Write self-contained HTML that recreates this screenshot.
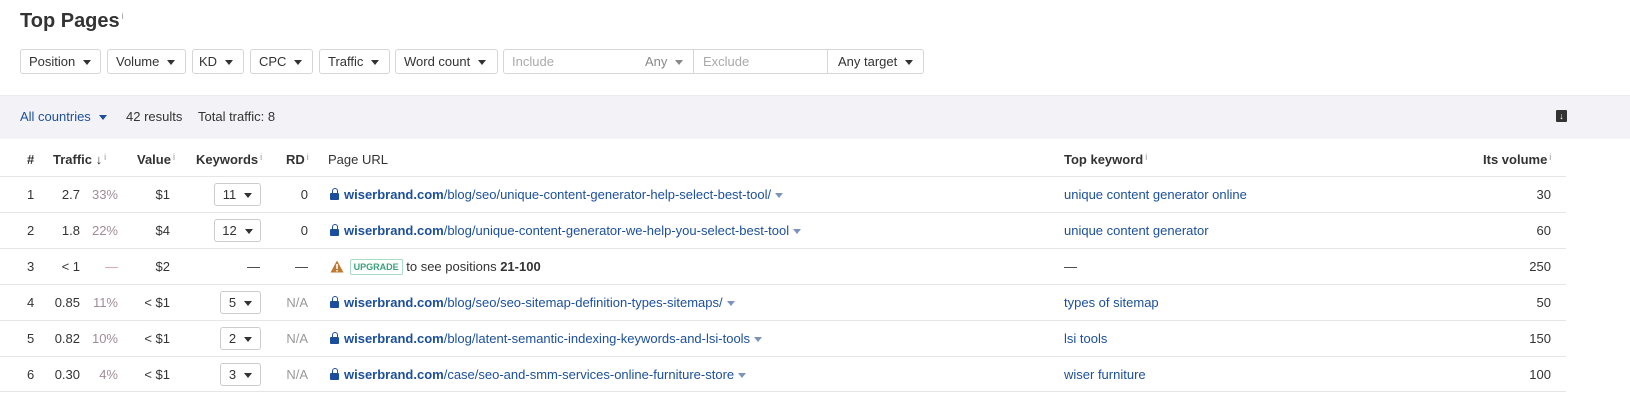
<!DOCTYPE html>
<html><head><style>
*{box-sizing:border-box;margin:0;padding:0}
body{width:1630px;height:410px;background:#fff;font-family:"Liberation Sans",Arial,sans-serif;font-size:13px;color:#333;position:relative;overflow:hidden}
.a{position:absolute;white-space:nowrap}
h1{position:absolute;left:20px;top:10px;font-size:20px;font-weight:bold;color:#333}
.sup{font-size:9px;color:#999;font-weight:normal;vertical-align:top;position:relative;top:1px;margin-left:2px}
.btn{position:absolute;top:49px;height:25px;border:1px solid #d6d6d6;border-radius:3px;padding:0 8px;line-height:23px;color:#333;white-space:nowrap}
.tri{display:inline-block;width:0;height:0;border-left:4px solid transparent;border-right:4px solid transparent;border-top:5px solid #333;margin-left:8px;vertical-align:1px}
.band{position:absolute;left:0;top:95px;width:1630px;height:44px;background:#f3f3f7;border-top:1px solid #e9e9ee}
.line{position:absolute;left:0;width:1566px;height:1px;background:#e6e6e6}
.th{position:absolute;top:152px;font-weight:bold;color:#333;white-space:nowrap}
.i{font-size:9px;color:#999;font-weight:normal;vertical-align:4px;margin-left:2px}
.r{text-align:right}
.g{color:#999}
.pc{color:#a08c98}
.lk{color:#1b4f9c}
.lk b{color:#1b4f9c}
.dd{position:absolute;width:47px;height:23px;border:1px solid #ccc;border-radius:3px;text-align:center;line-height:21px;white-space:nowrap}
.st{display:inline-block;width:0;height:0;border-left:4px solid transparent;border-right:4px solid transparent;border-top:5px solid #7c93bd;margin-left:4px;vertical-align:1px}
.lock{display:inline-block;width:9px;height:7px;background:#1b4f9c;border-radius:1px;position:relative;margin-right:5px;vertical-align:-1px}
.lock:before{content:"";position:absolute;left:1.5px;top:-5px;width:6px;height:6px;border:1.5px solid #1b4f9c;border-bottom:none;border-radius:3px 3px 0 0;box-sizing:border-box}
</style></head><body>
<h1>Top Pages<span class="sup">i</span></h1>
<div class="btn" style="left:20px;width:81px">Position<span class="tri"></span></div>
<div class="btn" style="left:107px;width:79px">Volume<span class="tri"></span></div>
<div class="btn" style="left:192px;width:52px;padding:0 6px">KD<span class="tri"></span></div>
<div class="btn" style="left:250px;width:63px">CPC<span class="tri"></span></div>
<div class="btn" style="left:319px;width:71px">Traffic<span class="tri"></span></div>
<div class="btn" style="left:395px;width:103px">Word count<span class="tri"></span></div>
<div class="btn" style="left:503px;width:421px;padding:0"></div>
<div class="a" style="left:512px;top:54px;color:#aaa">Include</div>
<div class="a" style="left:645px;top:54px;color:#888">Any<span class="tri" style="border-top-color:#888"></span></div>
<div class="a" style="left:693px;top:50px;width:1px;height:23px;background:#d6d6d6"></div>
<div class="a" style="left:703px;top:54px;color:#aaa">Exclude</div>
<div class="a" style="left:827px;top:50px;width:1px;height:23px;background:#d6d6d6"></div>
<div class="a" style="left:838px;top:54px">Any target<span class="tri"></span></div>

<div class="band"></div>
<div class="a lk" style="left:20px;top:109px">All countries<span class="tri" style="border-top-color:#1b4f9c"></span></div>
<div class="a" style="left:126px;top:109px">42 results</div>
<div class="a" style="left:198px;top:109px">Total traffic: 8</div>
<div class="a" style="left:1556px;top:110px;width:11px;height:12px;background:#333;border-radius:1px;color:#fff;font-size:9px;text-align:center;line-height:12px;font-weight:bold">↓</div>

<div class="th" style="left:27px">#</div>
<div class="th" style="left:53px">Traffic ↓<span class="i">i</span></div>
<div class="th" style="left:137px">Value<span class="i">i</span></div>
<div class="th" style="left:196px">Keywords<span class="i">i</span></div>
<div class="th" style="left:286px">RD<span class="i">i</span></div>
<div class="th" style="left:328px;font-weight:normal">Page URL</div>
<div class="th" style="left:1064px">Top keyword<span class="i">i</span></div>
<div class="th" style="left:1483px">Its volume<span class="i">i</span></div>

<div class="line" style="top:176px"></div>
<div class="line" style="top:212px"></div>
<div class="line" style="top:248px"></div>
<div class="line" style="top:284px"></div>
<div class="line" style="top:320px"></div>
<div class="line" style="top:356px"></div>
<div class="line" style="top:391px"></div>

<div class="a" style="left:27px;top:187px">1</div>
<div class="a r" style="left:40px;width:40px;top:187px">2.7</div>
<div class="a r pc" style="left:80px;width:38px;top:187px">33%</div>
<div class="a r" style="left:130px;width:40px;top:187px">$1</div>
<div class="dd" style="left:214px;top:183px">11<span class="tri"></span></div>
<div class="a r" style="left:268px;width:40px;top:187px">0</div>
<div class="a lk" style="left:330px;top:187px"><span class="lock"></span><b>wiserbrand.com</b>/blog/seo/unique-content-generator-help-select-best-tool/<span class="st"></span></div>
<div class="a lk" style="left:1064px;top:187px">unique content generator online</div>
<div class="a r" style="left:1450px;width:101px;top:187px">30</div>

<div class="a" style="left:27px;top:223px">2</div>
<div class="a r" style="left:40px;width:40px;top:223px">1.8</div>
<div class="a r pc" style="left:80px;width:38px;top:223px">22%</div>
<div class="a r" style="left:130px;width:40px;top:223px">$4</div>
<div class="dd" style="left:214px;top:219px">12<span class="tri"></span></div>
<div class="a r" style="left:268px;width:40px;top:223px">0</div>
<div class="a lk" style="left:330px;top:223px"><span class="lock"></span><b>wiserbrand.com</b>/blog/unique-content-generator-we-help-you-select-best-tool<span class="st"></span></div>
<div class="a lk" style="left:1064px;top:223px">unique content generator</div>
<div class="a r" style="left:1450px;width:101px;top:223px">60</div>

<div class="a" style="left:27px;top:259px">3</div>
<div class="a r" style="left:40px;width:40px;top:259px">&lt; 1</div>
<div class="a r" style="left:80px;width:38px;top:259px;color:#d9a0a8">—</div>
<div class="a r" style="left:130px;width:40px;top:259px">$2</div>
<div class="a r" style="left:220px;width:40px;top:259px">—</div>
<div class="a r" style="left:268px;width:40px;top:259px">—</div>
<div class="a" style="left:330px;top:259px"><svg width="14" height="13" viewBox="0 0 14 13" style="vertical-align:-2px"><path d="M7 0.5L13.5 12.5H0.5Z" fill="#c07a30"/><rect x="6.2" y="4" width="1.6" height="5" fill="#fff"/><rect x="6.2" y="10" width="1.6" height="1.5" fill="#fff"/></svg>
<span style="display:inline-block;border:1px solid #a7dcc6;border-radius:2px;color:#3aa37a;font-size:9px;font-weight:bold;padding:0 3px;line-height:14px;margin-left:2px;vertical-align:1px">UPGRADE</span> to see positions <b>21-100</b></div>
<div class="a" style="left:1064px;top:259px">—</div>
<div class="a r" style="left:1450px;width:101px;top:259px">250</div>

<div class="a" style="left:27px;top:295px">4</div>
<div class="a r" style="left:40px;width:40px;top:295px">0.85</div>
<div class="a r pc" style="left:80px;width:38px;top:295px">11%</div>
<div class="a r" style="left:130px;width:40px;top:295px">&lt; $1</div>
<div class="dd" style="left:220px;top:291px;width:41px">5<span class="tri"></span></div>
<div class="a r g" style="left:268px;width:40px;top:295px">N/A</div>
<div class="a lk" style="left:330px;top:295px"><span class="lock"></span><b>wiserbrand.com</b>/blog/seo/seo-sitemap-definition-types-sitemaps/<span class="st"></span></div>
<div class="a lk" style="left:1064px;top:295px">types of sitemap</div>
<div class="a r" style="left:1450px;width:101px;top:295px">50</div>

<div class="a" style="left:27px;top:331px">5</div>
<div class="a r" style="left:40px;width:40px;top:331px">0.82</div>
<div class="a r pc" style="left:80px;width:38px;top:331px">10%</div>
<div class="a r" style="left:130px;width:40px;top:331px">&lt; $1</div>
<div class="dd" style="left:220px;top:327px;width:41px">2<span class="tri"></span></div>
<div class="a r g" style="left:268px;width:40px;top:331px">N/A</div>
<div class="a lk" style="left:330px;top:331px"><span class="lock"></span><b>wiserbrand.com</b>/blog/latent-semantic-indexing-keywords-and-lsi-tools<span class="st"></span></div>
<div class="a lk" style="left:1064px;top:331px">lsi tools</div>
<div class="a r" style="left:1450px;width:101px;top:331px">150</div>

<div class="a" style="left:27px;top:367px">6</div>
<div class="a r" style="left:40px;width:40px;top:367px">0.30</div>
<div class="a r pc" style="left:80px;width:38px;top:367px">4%</div>
<div class="a r" style="left:130px;width:40px;top:367px">&lt; $1</div>
<div class="dd" style="left:220px;top:363px;width:41px">3<span class="tri"></span></div>
<div class="a r g" style="left:268px;width:40px;top:367px">N/A</div>
<div class="a lk" style="left:330px;top:367px"><span class="lock"></span><b>wiserbrand.com</b>/case/seo-and-smm-services-online-furniture-store<span class="st"></span></div>
<div class="a lk" style="left:1064px;top:367px">wiser furniture</div>
<div class="a r" style="left:1450px;width:101px;top:367px">100</div>
</body></html>
